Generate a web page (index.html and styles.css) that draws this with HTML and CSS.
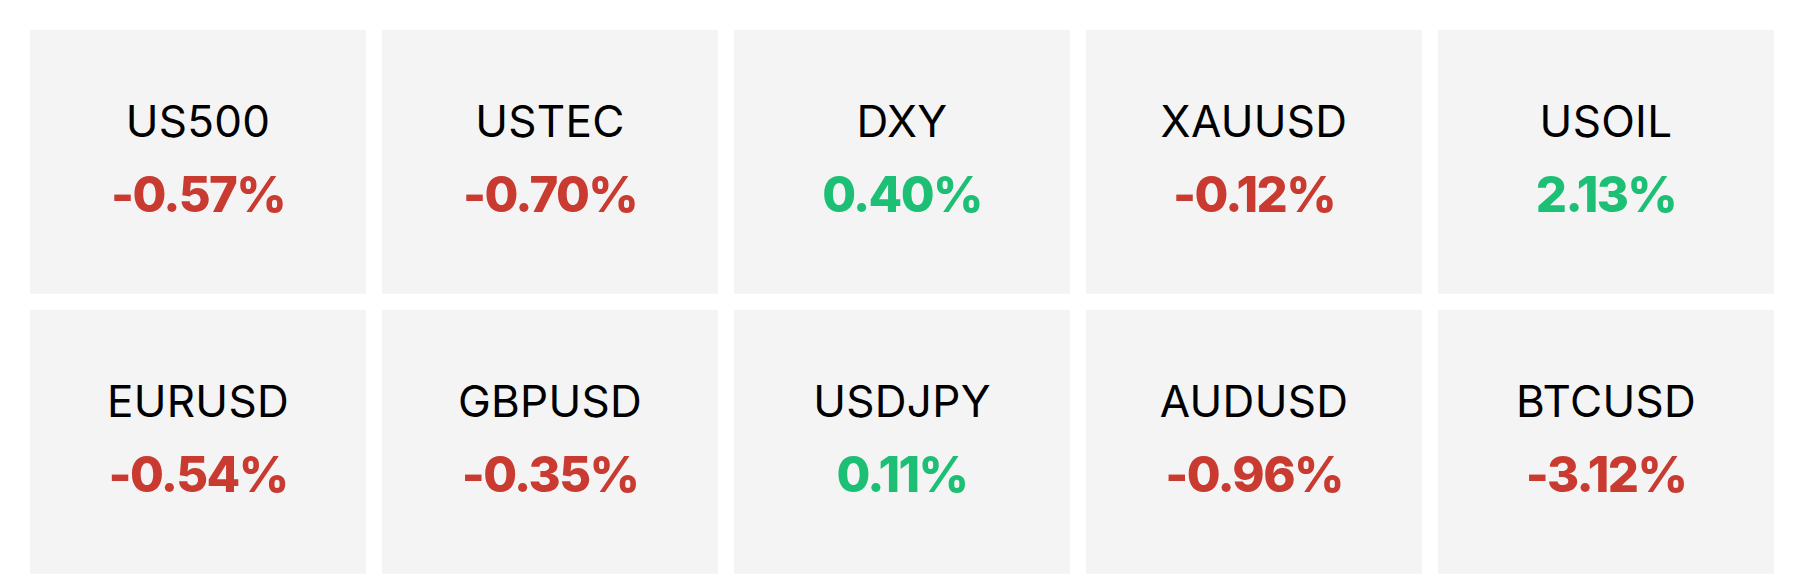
FILE: index.html
```html
<!DOCTYPE html>
<html lang="en">
<head>
<meta charset="utf-8">
<title>Markets</title>
<link rel="stylesheet" href="styles.css">
</head>
<body>
<div class="grid">
  <div class="card"><div class="sym">US500</div><div class="chg down">-0.57%</div></div>
  <div class="card"><div class="sym">USTEC</div><div class="chg down">-0.70%</div></div>
  <div class="card"><div class="sym">DXY</div><div class="chg up">0.40%</div></div>
  <div class="card"><div class="sym">XAUUSD</div><div class="chg down">-0.12%</div></div>
  <div class="card"><div class="sym">USOIL</div><div class="chg up">2.13%</div></div>
  <div class="card"><div class="sym">EURUSD</div><div class="chg down">-0.54%</div></div>
  <div class="card"><div class="sym">GBPUSD</div><div class="chg down">-0.35%</div></div>
  <div class="card"><div class="sym">USDJPY</div><div class="chg up">0.11%</div></div>
  <div class="card"><div class="sym">AUDUSD</div><div class="chg down">-0.96%</div></div>
  <div class="card"><div class="sym">BTCUSD</div><div class="chg down">-3.12%</div></div>
</div>
</body>
</html>
```
FILE: styles.css
```css
html, body {
  margin: 0;
  padding: 0;
  background: #ffffff;
}
body {
  font-family: Inter, "Noto Sans", sans-serif;
}
.grid {
  display: grid;
  grid-template-columns: repeat(5, 1fr);
  grid-auto-rows: 264px;
  gap: 16px;
  padding: 30px 33px 9px 30px;
}
.card {
  background: #f4f4f4;
  display: flex;
  flex-direction: column;
  align-items: center;
  justify-content: center;
  padding-bottom: 8px;
  box-sizing: border-box;
}
.sym {
  font-size: 44px;
  font-weight: 400;
  color: #000;
  line-height: 60px;
  letter-spacing: 0.3px;
}
.chg {
  font-size: 49px;
  font-weight: 800;
  line-height: 60px;
  margin-top: 14px;
  letter-spacing: -1.6px;
}
.down { color: #c93a30; }
.up { color: #1dbf75; }
```
